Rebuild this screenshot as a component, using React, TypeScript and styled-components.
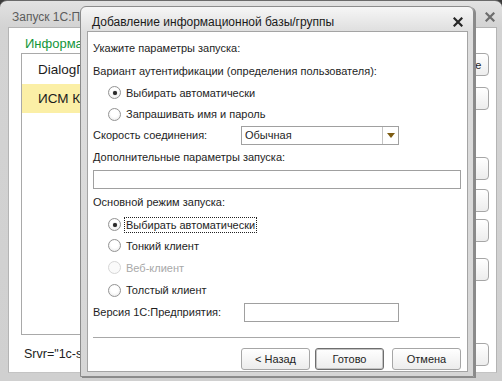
import styled, { createGlobalStyle } from "styled-components"

const Global = createGlobalStyle`
  html, body {
    margin: 0;
    padding: 0;
    background: #3c3c3c;
  }
  body {
    width: 502px;
    height: 381px;
    overflow: hidden;
    font-family: "Liberation Sans", Arial, sans-serif;
    font-size: 11px;
    color: #1e1e1e;
  }
`

const outerButtons = [
  { text: "1С:Предприятие", top: 0 },
  { text: "Конфигуратор", top: 11 },
  { text: "Добавить...", top: 47 },
  { text: "Изменить...", top: 9 },
  { text: "Удалить...", top: 7 },
  { text: "Настройка...", top: 16 },
  { text: "Выход", top: 62 },
]

function CloseIcon({ color, size }: { color: string; size: number }) {
  return (
    <svg width={size} height={size} viewBox="0 0 10 10">
      <path d="M1.5 1.5 L8.5 8.5 M8.5 1.5 L1.5 8.5" stroke={color} strokeWidth="2.2" strokeLinecap="square" />
    </svg>
  )
}

export default function App() {
  return (
    <Desktop>
      <Global />
      <MainWindow>
        <MainTitle>
          <MainCaption>Запуск 1С:Предприятия</MainCaption>
          <CloseIcon color="#6c6c6c" size={10} />
        </MainTitle>
        <MainBody>
          <LeftColumn>
            <GreenLabel>Информационные базы</GreenLabel>
            <BaseList>
              <BaseItem>DialogПроверка</BaseItem>
              <BaseItem selected>ИСМ Клиент</BaseItem>
            </BaseList>
            <ConnString>Srvr="1c-server";Ref="ism";</ConnString>
          </LeftColumn>
          <RightColumn>
            {outerButtons.map((b) => (
              <SideButton key={b.text} offset={b.top}>{b.text}</SideButton>
            ))}
          </RightColumn>
        </MainBody>
      </MainWindow>

      <Dialog>
        <DialogTitle>
          <DialogCaption>Добавление информационной базы/группы</DialogCaption>
          <CloseIcon color="#262626" size={10} />
        </DialogTitle>
        <DialogBody>
          <Row h={22}>Укажите параметры запуска:</Row>
          <Row h={23}>Вариант аутентификации (определения пользователя):</Row>
          <Row h={21}>
            <Radio checked />
            <RadioText>Выбирать автоматически</RadioText>
          </Row>
          <Row h={22}>
            <Radio />
            <RadioText>Запрашивать имя и пароль</RadioText>
          </Row>
          <Row h={20}>
            <FieldLabel w={148}>Скорость соединения:</FieldLabel>
            <Select>
              <SelectValue>Обычная</SelectValue>
              <SelectArrow>
                <svg width="8" height="5" viewBox="0 0 8 5">
                  <path d="M0 0 H8 L4 5 Z" fill="#7d5c12" />
                </svg>
              </SelectArrow>
            </Select>
          </Row>
          <Row h={24}>Дополнительные параметры запуска:</Row>
          <Row h={21}>
            <TextInput w={370} />
          </Row>
          <Row h={24}>Основной режим запуска:</Row>
          <Row h={21}>
            <Radio checked />
            <RadioText focused>Выбирать автоматически</RadioText>
          </Row>
          <Row h={21}>
            <Radio />
            <RadioText>Тонкий клиент</RadioText>
          </Row>
          <Row h={23}>
            <Radio disabled />
            <RadioText disabled>Веб-клиент</RadioText>
          </Row>
          <Row h={22}>
            <Radio />
            <RadioText>Толстый клиент</RadioText>
          </Row>
          <Row h={22}>
            <FieldLabel w={151}>Версия 1С:Предприятия:</FieldLabel>
            <TextInput w={155} />
          </Row>
          <Separator />
          <ButtonBar>
            <DialogButton>&lt; Назад</DialogButton>
            <DialogButton isDefault>Готово</DialogButton>
            <DialogButton>Отмена</DialogButton>
          </ButtonBar>
        </DialogBody>
      </Dialog>
    </Desktop>
  )
}

const Desktop = styled.div`
  position: relative;
  width: 502px;
  height: 381px;
  overflow: hidden;
  background: #3c3c3c;
`

const MainWindow = styled.div`
  width: 502px;
  height: 382px;
  box-sizing: border-box;
  display: flex;
  flex-direction: column;
  padding: 0 5px 9px 8px;
  border-radius: 7px 7px 0 0;
  border-top: 1px solid #6a6a6a;
  background: linear-gradient(to bottom, #e2e2e2 0, #d3d3d3 26px, #d0d0d0 100%);
`

const MainTitle = styled.div`
  height: 26px;
  flex-shrink: 0;
  box-sizing: border-box;
  display: flex;
  align-items: center;
  justify-content: space-between;
  padding: 5px 2px 0 4px;
`

const MainCaption = styled.span`
  font-size: 12px;
  color: #5c5c5c;
`

const MainBody = styled.div`
  flex: 1;
  min-height: 0;
  display: flex;
  gap: 8px;
  background: #ffffff;
  border: 1px solid #b4b4b4;
  border-bottom-color: #c4c4c4;
  padding: 8px 7px 0 12px;
`

const LeftColumn = styled.div`
  flex: 1;
  display: flex;
  flex-direction: column;
`

const GreenLabel = styled.div`
  height: 17px;
  line-height: 15px;
  padding-left: 4px;
  font-size: 13px;
  color: #13963a;
`

const BaseList = styled.div`
  height: 282px;
  flex-shrink: 0;
  box-sizing: border-box;
  border: 1px solid #a9a9a9;
  padding-top: 1px;
`

const BaseItem = styled.div<{ selected?: boolean }>`
  height: 29px;
  display: flex;
  align-items: center;
  padding-left: 16px;
  font-size: 13.5px;
  color: #1c1c1c;
  background: ${(p) => (p.selected ? "#fbefa6" : "transparent")};
`

const ConnString = styled.div`
  margin-top: 12px;
  padding-left: 3px;
  font-size: 12.5px;
  color: #222;
`

const RightColumn = styled.div`
  width: 100px;
  display: flex;
  flex-direction: column;
  padding-top: 17px;
`

const SideButton = styled.div<{ offset: number }>`
  height: 23px;
  flex-shrink: 0;
  box-sizing: border-box;
  margin-top: ${(p) => p.offset}px;
  display: flex;
  align-items: center;
  justify-content: center;
  border: 1px solid #a6a6a6;
  border-radius: 4px;
  background: linear-gradient(to bottom, #ffffff, #ededed);
  white-space: nowrap;
  overflow: hidden;
`

const Dialog = styled.div`
  position: absolute;
  left: 80px;
  top: 6px;
  width: 394px;
  height: 371px;
  box-sizing: border-box;
  display: flex;
  flex-direction: column;
  padding: 0 5px 4px 6px;
  border: 1px solid #8c8c8c;
  border-radius: 6px 6px 0 0;
  background: linear-gradient(to bottom, #f6f6f6 0, #dedede 25px, #d6d6d6 100%);
  box-shadow: 2px 1px 0 #8a8a8a;
`

const DialogTitle = styled.div`
  height: 24px;
  flex-shrink: 0;
  box-sizing: border-box;
  display: flex;
  align-items: center;
  justify-content: space-between;
  padding: 5px 5px 0 5px;
`

const DialogCaption = styled.span`
  font-size: 12px;
  color: #1a1a1a;
`

const DialogBody = styled.div`
  flex: 1;
  min-height: 0;
  display: flex;
  flex-direction: column;
  background: #ffffff;
  border: 1px solid #a4a4a4;
  padding: 5px 6px 0 5px;
`

const Row = styled.div<{ h: number }>`
  height: ${(p) => p.h}px;
  flex-shrink: 0;
  display: flex;
  align-items: center;
  white-space: nowrap;
`

const Radio = styled.span<{ checked?: boolean; disabled?: boolean }>`
  width: 11px;
  height: 11px;
  margin-left: 15px;
  margin-right: 4px;
  border-radius: 50%;
  border: 1px solid ${(p) => (p.disabled ? "#d6d6d6" : "#949494")};
  background: ${(p) =>
    p.disabled ? "#fafafa" : "radial-gradient(circle at 50% 40%, #ffffff 40%, #e4e4e4 100%)"};
  display: flex;
  align-items: center;
  justify-content: center;
  &::after {
    content: "";
    width: 4px;
    height: 4px;
    border-radius: 50%;
    background: #2a2a2a;
    box-shadow: 0 0 1px #444;
    display: ${(p) => (p.checked ? "block" : "none")};
  }
`

const RadioText = styled.span<{ focused?: boolean; disabled?: boolean }>`
  color: ${(p) => (p.disabled ? "#a8a8a8" : "inherit")};
  padding: 1px 1px;
  outline: ${(p) => (p.focused ? "1px dotted #222" : "none")};
`

const FieldLabel = styled.span<{ w: number }>`
  width: ${(p) => p.w}px;
`

const Select = styled.div`
  width: 158px;
  height: 19px;
  box-sizing: border-box;
  display: flex;
  border: 1px solid #a0a0a0;
`

const SelectValue = styled.span`
  flex: 1;
  padding-left: 3px;
  display: flex;
  align-items: center;
`

const SelectArrow = styled.span`
  width: 15px;
  border-left: 1px solid #c4c4c4;
  display: flex;
  align-items: center;
  justify-content: center;
`

const TextInput = styled.div<{ w: number }>`
  width: ${(p) => p.w}px;
  height: 19px;
  box-sizing: border-box;
  border: 1px solid #a0a0a0;
`

const Separator = styled.div`
  margin-top: 14px;
  height: 1px;
  flex-shrink: 0;
  margin-right: 1px;
  background: #a8a8a8;
`

const ButtonBar = styled.div`
  margin-top: 10px;
  display: flex;
  justify-content: flex-end;
  gap: 5px;
  & > :last-child {
    margin-left: 3px;
  }
`

const DialogButton = styled.div<{ isDefault?: boolean }>`
  width: 69px;
  height: 22px;
  box-sizing: border-box;
  display: flex;
  align-items: center;
  justify-content: center;
  border: 1px solid ${(p) => (p.isDefault ? "#6e6e6e" : "#a6a6a6")};
  border-radius: 3px;
  box-shadow: ${(p) => (p.isDefault ? "inset 0 0 0 1px #c2c2c2" : "none")};
  background: linear-gradient(to bottom, #ffffff, #ececec);
`
